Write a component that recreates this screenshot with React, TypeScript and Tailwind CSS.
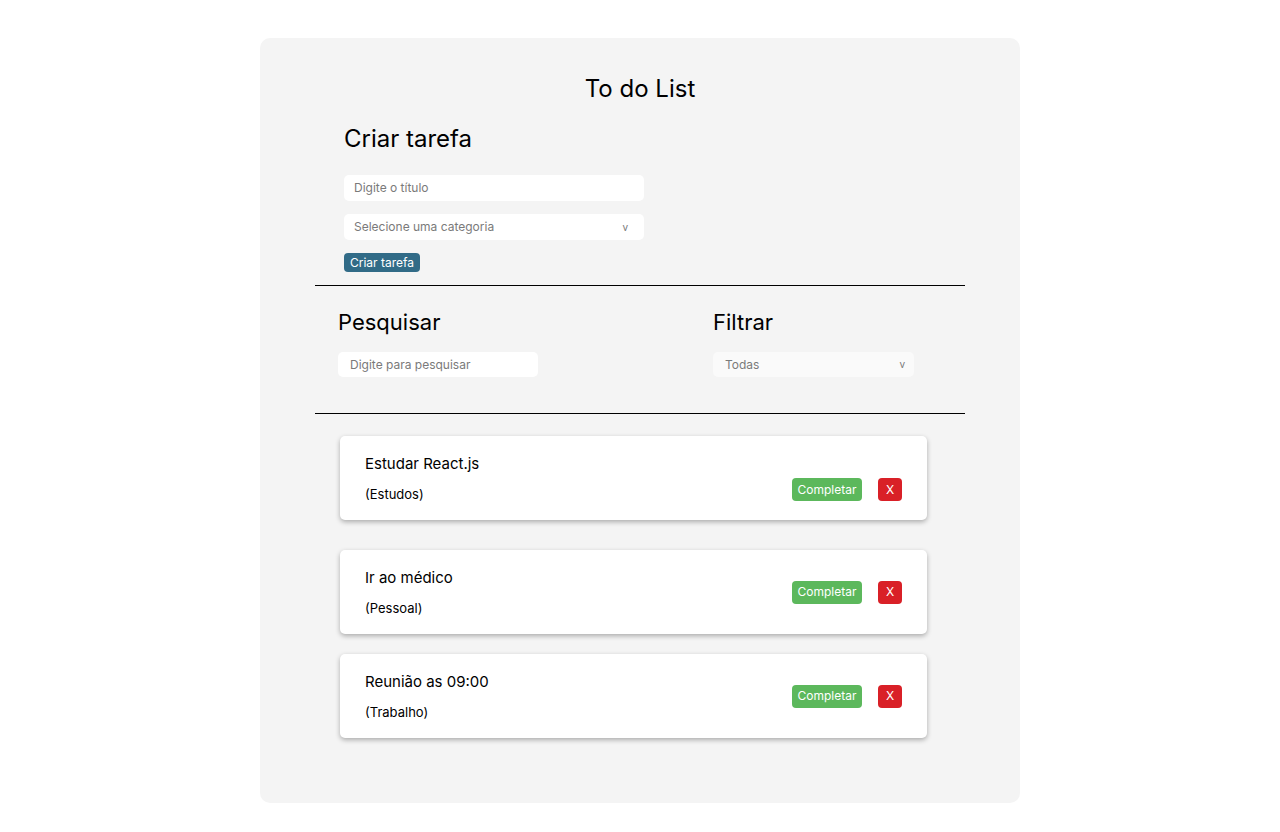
import React from "react";

const tasks = [
  { title: "Estudar React.js", cat: "(Estudos)", gap: "mt-[22px]", btn: "mt-[23px]" },
  { title: "Ir ao médico", cat: "(Pessoal)", gap: "mt-[30px]", btn: "" },
  { title: "Reunião as 09:00", cat: "(Trabalho)", gap: "mt-[20px]", btn: "" },
];

export default function App() {
  return (
    <div className="min-h-[832px] bg-white pt-[38px]" style={{ fontFamily: "Inter, 'Noto Sans', sans-serif" }}>
      <div className="mx-auto h-[765px] w-[760px] rounded-[10px] bg-[#f4f4f4] px-[55px] pt-[36px] text-black">
        <h1 className="text-center text-[24px] leading-[30px]">To do List</h1>
        <div className="pl-[29px]">
          <h2 className="mt-[20px] text-[24px] leading-[30px]">Criar tarefa</h2>
          <div className="mt-[21px] flex w-[300px] flex-col gap-[13px]">
            <div className="flex h-[26px] items-center rounded-[5px] bg-white px-[10px] text-[12px] text-[#7a7a7a]">Digite o título</div>
            <div className="flex h-[26px] items-center justify-between rounded-[5px] bg-white pl-[10px] pr-[16px] text-[12px] text-[#7a7a7a]">
              <span>Selecione uma categoria</span>
              <span className="text-[10px]">v</span>
            </div>
          </div>
          <button className="mt-[13px] flex h-[19px] w-[76px] items-center justify-center rounded-[4px] bg-[#316b87] text-[12px] text-white">Criar tarefa</button>
        </div>
        <div className="mt-[13px] h-px bg-black" />
        <div className="flex pl-[23px] pt-[22px]">
          <div className="w-[375px]">
            <h2 className="text-[22px] leading-[28px]">Pesquisar</h2>
            <div className="mt-[16px] flex h-[25px] w-[200px] items-center rounded-[5px] bg-white px-[12px] text-[12px] text-[#7a7a7a]">Digite para pesquisar</div>
          </div>
          <div>
            <h2 className="text-[22px] leading-[28px]">Filtrar</h2>
            <div className="mt-[16px] flex h-[25px] w-[201px] items-center justify-between rounded-[5px] bg-[#fafafa] pl-[12px] pr-[9px] text-[12px] text-[#7a7a7a]">
              <span>Todas</span>
              <span className="text-[10px]">v</span>
            </div>
          </div>
        </div>
        <div className="mt-[36px] h-px bg-black" />
        <div className="pl-[25px]">
          {tasks.map((t) => (
            <div key={t.title} className={`${t.gap} flex h-[84px] w-[587px] items-center justify-between rounded-[5px] bg-white px-[25px] shadow-[0_2px_5px_rgba(0,0,0,0.3)]`}>
              <div className="flex flex-col pt-[2px]">
                <span className="text-[15px] leading-[20px]">{t.title}</span>
                <span className="mt-[10px] text-[13px] leading-[20px]">{t.cat}</span>
              </div>
              <div className={`${t.btn} flex items-center gap-[16px]`}>
                <button className="flex h-[23px] w-[70px] items-center justify-center rounded-[4px] bg-[#5cb85c] text-[12px] text-white">Completar</button>
                <button className="flex h-[23px] w-[24px] items-center justify-center rounded-[4px] bg-[#d92027] text-[12px] text-white">X</button>
              </div>
            </div>
          ))}
        </div>
      </div>
    </div>
  );
}
